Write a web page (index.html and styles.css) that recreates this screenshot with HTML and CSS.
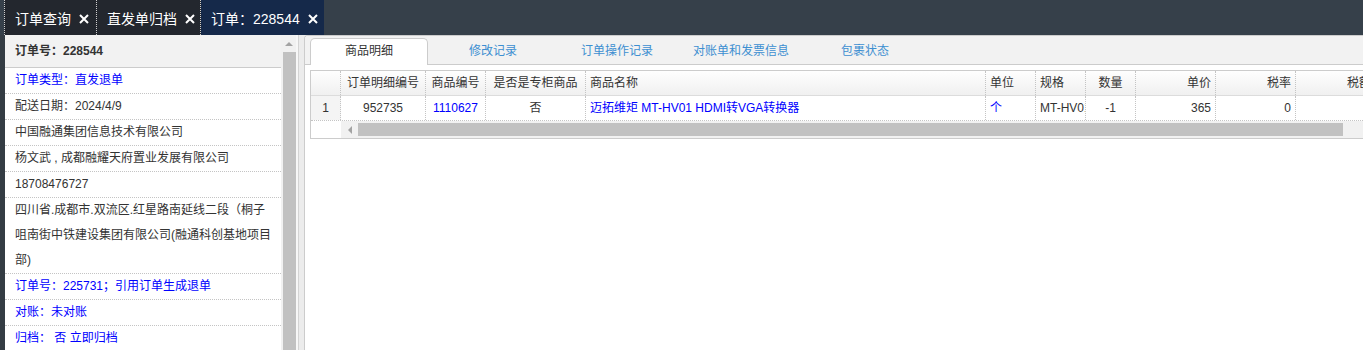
FILE: index.html
```html
<!DOCTYPE html>
<html lang="zh-CN">
<head>
  <meta charset="UTF-8" />
  <title>订单：228544</title>
  <link rel="stylesheet" href="styles.css">
</head>
<body>
  <div class="topbar">
    <div class="top-tab first">订单查询<svg class="close" viewBox="0 0 10 10"><path d="M1 1L9 9M9 1L1 9" /></svg></div>
    <div class="top-tab second">直发单归档<svg class="close" viewBox="0 0 10 10"><path d="M1 1L9 9M9 1L1 9" /></svg></div>
    <div class="top-tab active">订单：228544<svg class="close" viewBox="0 0 10 10"><path d="M1 1L9 9M9 1L1 9" /></svg></div>
  </div>

  <div class="main">
    <div class="side">
      <div class="side-body">
        <div class="side-head">订单号：228544</div>
        <div class="info link">订单类型：直发退单</div>
        <div class="info">配送日期：2024/4/9</div>
        <div class="info">中国融通集团信息技术有限公司</div>
        <div class="info">杨文武 , 成都融耀天府置业发展有限公司</div>
        <div class="info">18708476727</div>
        <div class="info">四川省.成都市.双流区.红星路南延线二段（桐子<br>咀南街中铁建设集团有限公司(融通科创基地项目<br>部)</div>
        <div class="info link">订单号：225731；引用订单生成退单</div>
        <div class="info link">对账：未对账</div>
        <div class="info link">归档： 否 立即归档</div>
      </div>
      <div class="vscroll">
        <div class="vs-btn"><span class="tri-up"></span></div>
        <div class="vs-thumb"></div>
      </div>
    </div>

    <div class="splitter"></div>

    <div class="content">
      <div class="tabstrip">
        <div class="ctab on">商品明细</div>
        <div class="ctab">修改记录</div>
        <div class="ctab">订单操作记录</div>
        <div class="ctab">对账单和发票信息</div>
        <div class="ctab">包裹状态</div>
      </div>

      <div class="pane">
        <div class="grid">
          <div class="grow ghead">
            <div class="cell c-rn"></div>
            <div class="cell c-id center">订单明细编号</div>
            <div class="cell c-no center">商品编号</div>
            <div class="cell c-zg center">是否是专柜商品</div>
            <div class="cell c-name">商品名称</div>
            <div class="cell c-unit">单位</div>
            <div class="cell c-spec">规格</div>
            <div class="cell c-qty center">数量</div>
            <div class="cell c-price right">单价</div>
            <div class="cell c-rate right">税率</div>
            <div class="cell c-tax right">税额</div>
          </div>
          <div class="grow gdata">
            <div class="cell c-rn rn center">1</div>
            <div class="cell c-id center">952735</div>
            <div class="cell c-no center link">1110627</div>
            <div class="cell c-zg center">否</div>
            <div class="cell c-name link">迈拓维矩 MT-HV01 HDMI转VGA转换器</div>
            <div class="cell c-unit link">个</div>
            <div class="cell c-spec">MT-HV01</div>
            <div class="cell c-qty center">-1</div>
            <div class="cell c-price right">365</div>
            <div class="cell c-rate right">0</div>
            <div class="cell c-tax right"></div>
          </div>
          <div class="hscroll">
            <div class="hs-blank"></div>
            <div class="hs-track">
              <div class="hs-btn"><span class="tri-left"></span></div>
              <div class="hs-thumb"></div>
            </div>
          </div>
        </div>
      </div>
    </div>
  </div>
</body>
</html>
```

FILE: styles.css
```css
* {
  box-sizing: border-box;
}

html,
body {
  margin: 0;
  height: 350px;
  overflow: hidden;
}

body {
  background-color: #343c44;
  font-family: "Liberation Sans", "Noto Sans CJK SC", sans-serif;
  font-size: 12px;
  color: #333;
}

/* top tabs */
.topbar {
  display: flex;
  height: 35px;
  padding-left: 4px;
  background-color: #36404a;
}

.top-tab {
  display: flex;
  align-items: center;
  height: 35px;
  padding-left: 10px;
  font-size: 14px;
  color: #fff;
  background-color: #23272e;
  border-right: 1px dotted #cfcfcf;
}

.top-tab.first {
  width: 93px;
  border-left: 1px dotted #cfcfcf;
}

.top-tab.second { width: 104px; }

.top-tab.active {
  width: 123px;
  background-color: #15294a;
  border-right: none;
}

.close {
  width: 10px;
  height: 10px;
  margin-left: 8px;
  margin-top: 2px;
}

.close path {
  stroke: #fff;
  stroke-width: 2;
  fill: none;
}

/* layout */
.main {
  display: flex;
  height: 315px;
  margin-left: 5px;
  background-color: #ececec;
}

.side {
  display: flex;
  width: 291px;
  background-color: #fff;
}

.side-body {
  width: 276px;
}

.side-head {
  height: 33px;
  line-height: 32px;
  padding-left: 10px;
  background-color: #f2f2f2;
  border-bottom: 1px solid #ccc;
  font-weight: bold;
}

.info {
  line-height: 25px;
  padding-left: 10px;
  border-bottom: 1px dotted #c4c4c4;
  white-space: nowrap;
}

.link { color: #0000ff; }

.vscroll {
  display: flex;
  flex-direction: column;
  width: 15px;
  background-color: #f1f1f1;
}

.vs-btn {
  display: flex;
  align-items: center;
  justify-content: center;
  height: 17px;
}

.tri-up {
  border-left: 4px solid transparent;
  border-right: 4px solid transparent;
  border-bottom: 4px solid #a3a3a3;
}

.vs-thumb {
  flex: 1;
  margin-left: 2px;
  background-color: #c1c1c1;
}

.splitter {
  width: 8px;
  background: linear-gradient(to right, #f7f7f7 0 2px, #d4d4d4 2px 3px, #ececec 3px);
}

/* right content */
.content {
  flex: 1;
  min-width: 0;
  background-color: #fff;
  border-left: 1px solid #ccc;
  border-top: 1px solid #ccc;
  border-top-left-radius: 4px;
}

.tabstrip {
  display: flex;
  align-items: flex-end;
  gap: 6px;
  height: 29px;
  padding-left: 5px;
  background-color: #f2f2f2;
  border-bottom: 1px solid #ccc;
  border-top-left-radius: 3px;
}

.ctab {
  width: 118px;
  height: 27px;
  margin-bottom: -1px;
  line-height: 25px;
  text-align: center;
  color: #3d8fd1;
  border: 1px solid transparent;
  border-bottom: none;
}

.ctab.on {
  color: #333;
  background-color: #fff;
  border-color: #ccc;
  border-radius: 5px 5px 0 0;
}

.pane {
  padding: 5px 0 0 5px;
}

.grid {
  border: 1px solid #ccc;
  border-right: none;
  overflow: hidden;
}

.grow {
  display: flex;
  height: 25px;
}

.ghead {
  background: linear-gradient(#fefefe, #f0f0f0);
  border-bottom: 1px solid #dcdcdc;
}

.gdata {
  border-bottom: 1px dotted #c4c4c4;
}

.cell {
  flex: none;
  line-height: 24px;
  padding: 0 4px;
  border-right: 1px dotted #c4c4c4;
  white-space: nowrap;
  overflow: hidden;
}

.center { text-align: center; }
.right { text-align: right; }

.rn { background-color: #f4f4f4; }

.c-rn { width: 30px; }
.c-id { width: 85px; }
.c-no { width: 60px; }
.c-zg { width: 100px; }
.c-name { width: 400px; }
.c-unit { width: 50px; }
.c-spec { width: 50px; }
.c-qty { width: 50px; }
.c-price { width: 80px; }
.c-rate { width: 80px; }
.c-tax { width: 80px; }

.hscroll {
  display: flex;
  height: 17px;
}

.hs-blank {
  width: 30px;
  background-color: #fff;
}

.hs-track {
  flex: 1;
  display: flex;
  align-items: center;
  background-color: #f1f1f1;
}

.hs-btn {
  display: flex;
  align-items: center;
  justify-content: center;
  width: 17px;
  height: 17px;
}

.tri-left {
  border-top: 4px solid transparent;
  border-bottom: 4px solid transparent;
  border-right: 4px solid #a3a3a3;
}

.hs-thumb {
  width: 985px;
  height: 13px;
  background-color: #c1c1c1;
}
```
